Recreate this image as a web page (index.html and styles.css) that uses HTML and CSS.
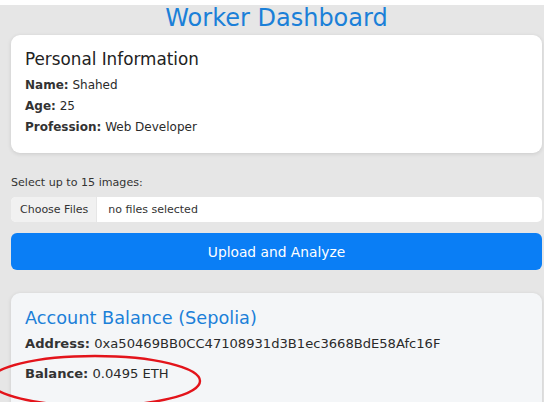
FILE: index.html
```html
<!DOCTYPE html>
<html>
<head>
<meta charset="utf-8">
<link rel="stylesheet" href="styles.css">
</head>
<body>
<div class="frame">
  <h1 class="title">Worker Dashboard</h1>
  <section class="card">
    <h2 class="card-title">Personal Information</h2>
    <p class="row"><b>Name:</b> Shahed</p>
    <p class="row"><b>Age:</b> 25</p>
    <p class="row"><b>Profession:</b> Web Developer</p>
  </section>
  <div class="upload">
    <label class="upload-label">Select up to 15 images:</label>
    <div class="file">
      <span class="file-btn">Choose Files</span>
      <span class="file-name">no files selected</span>
    </div>
    <button class="btn">Upload and Analyze</button>
  </div>
  <section class="card card-alt">
    <h2 class="card-title blue">Account Balance (Sepolia)</h2>
    <p class="row big addr"><b>Address:</b> 0xa50469BB0CC47108931d3B1ec3668BdE58Afc16F</p>
    <p class="row big"><b>Balance:</b> 0.0495 ETH</p>
  </section>
  <svg class="ring" width="212" height="58" viewBox="0 0 212 58">
    <ellipse cx="104" cy="28" rx="105" ry="25" fill="none" stroke="#e3141b" stroke-width="2.4"/>
  </svg>
</div>
</body>
</html>
```
FILE: styles.css
```css
html, body {
  margin: 0;
  padding: 0;
  background: #ffffff;
}
body {
  font-family: "DejaVu Sans", Verdana, sans-serif;
  color: #222;
  width: 550px;
  height: 410px;
  overflow: hidden;
}
.frame {
  position: relative;
  margin-top: 5px;
  width: 544px;
  height: 397px;
  background: #e6e6e6;
  box-sizing: border-box;
  padding: 0 2px 0 11px;
  overflow: hidden;
}
.title {
  margin: 0;
  height: 30px;
  line-height: 26px;
  text-align: center;
  font-weight: normal;
  font-size: 24px;
  color: #1b80d8;
}
.card {
  background: #ffffff;
  border-radius: 9px;
  box-shadow: 0 1px 4px rgba(0,0,0,0.12);
  padding: 12px 14px 14px;
  height: 118px;
  box-sizing: border-box;
}
.card-title {
  margin: 0 0 4px;
  font-weight: normal;
  font-size: 16.8px;
  line-height: 24px;
  color: #222;
}
.row {
  margin: 0;
  font-size: 12px;
  line-height: 21px;
  color: #2a2a2a;
}
.row b {
  color: #333;
}
.upload {
  padding-top: 22px;
}
.upload-label {
  display: block;
  font-size: 11.1px;
  line-height: 16px;
  color: #333;
  margin-bottom: 6px;
}
.file {
  display: flex;
  height: 25px;
  background: #ffffff;
  border-radius: 5px;
  overflow: hidden;
  font-size: 11px;
  line-height: 25px;
  color: #333;
}
.file-btn {
  background: #f1f1f1;
  padding: 0 8px 0 9px;
  border-right: 1px solid #e6e6e6;
}
.file-name {
  padding-left: 11px;
}
.btn {
  display: block;
  width: 100%;
  margin-top: 11px;
  height: 37px;
  border: none;
  border-radius: 6px;
  background: #0a7ef5;
  color: #ffffff;
  font-family: "DejaVu Sans", Verdana, sans-serif;
  font-size: 13.8px;
}
.card-alt {
  margin-top: 23px;
  background: #f4f6f8;
  height: 140px;
  padding-top: 13px;
}
.blue {
  font-size: 17.7px;
  color: #1b80d8;
  margin-bottom: 3px;
}
.big {
  font-size: 13.1px;
}
.addr {
  margin-bottom: 9px;
}
.ring {
  position: absolute;
  left: -9px;
  top: 348px;
}
```
